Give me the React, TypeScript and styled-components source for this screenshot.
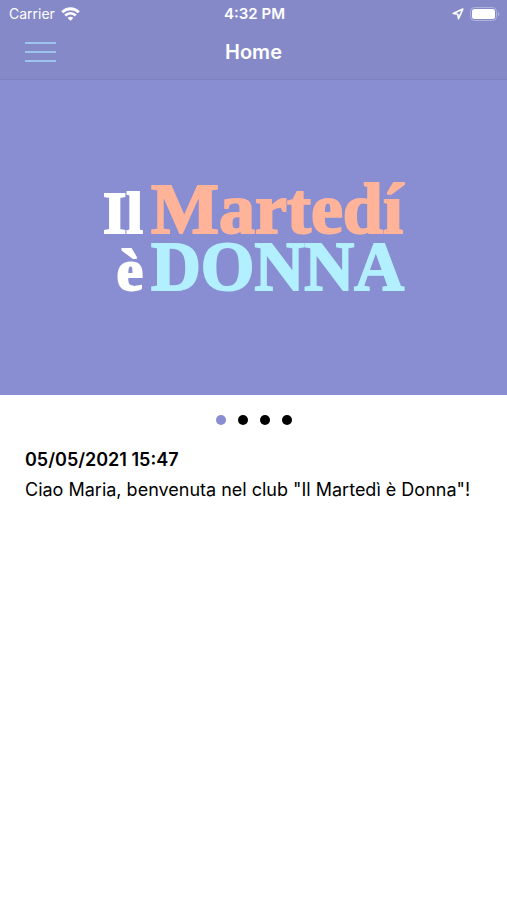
import { useState } from 'react';
import styled, { createGlobalStyle, ThemeProvider } from 'styled-components';

const theme = {
  colors: {
    primary: '#898dd1',
    header: '#8689c8',
    headerBorder: '#7c80bf',
    aqua: '#b3f0ff',
    peach: '#ffb49a',
    menu: '#9bc5ee',
    white: '#ffffff',
    black: '#000000',
  },
};

const GlobalStyle = createGlobalStyle`
  * {
    box-sizing: border-box;
  }

  body {
    margin: 0;
    background: #ffffff;
    color: #000000;
    font-family: Inter, 'Liberation Sans', sans-serif;
  }
`;

const Header = styled.header`
  padding-bottom: 3px;
  background: ${(props) => props.theme.colors.header};
  border-bottom: 1px solid ${(props) => props.theme.colors.headerBorder};
  color: ${(props) => props.theme.colors.white};
`;

const StatusBar = styled.div`
  display: grid;
  grid-template-columns: 1fr auto 1fr;
  align-items: center;
  height: 28px;
  padding: 0 7px 0 9px;
  font-size: 14px;
  line-height: 20px;
`;

const StatusGroup = styled.div<{ $end?: boolean }>`
  display: flex;
  align-items: center;
  justify-content: ${(props) => (props.$end ? 'flex-end' : 'flex-start')};
  gap: 6px;
`;

const Clock = styled.time`
  font-size: 15px;
  font-weight: 600;
`;

const NavBar = styled.nav`
  display: grid;
  grid-template-columns: 1fr auto 1fr;
  align-items: center;
  height: 48px;
  padding: 0 25px;
`;

const MenuButton = styled.button`
  display: flex;
  flex-direction: column;
  justify-self: start;
  gap: 7px;
  width: 31px;
  padding: 0;
  border: 0;
  background: none;
  cursor: pointer;
`;

const MenuLine = styled.span`
  height: 2px;
  background: ${(props) => props.theme.colors.menu};
`;

const Title = styled.h1`
  margin: 0;
  font-size: 20px;
  font-weight: 600;
  line-height: 24px;
`;

const Hero = styled.section`
  display: flex;
  justify-content: center;
  padding: 100px 16px 99px;
  background: ${(props) => props.theme.colors.primary};
`;

const Logo = styled.div`
  display: grid;
  grid-template-columns: auto auto;
  align-items: baseline;
  column-gap: 8px;
  font-family: 'Liberation Serif', serif;
  font-weight: 700;
`;

const LogoSmall = styled.span`
  justify-self: end;
  color: ${(props) => props.theme.colors.white};
  font-size: 60px;
  line-height: 50px;
  -webkit-text-stroke: 2px currentColor;
`;

const LogoLarge = styled.span<{ $tone: 'peach' | 'aqua' }>`
  color: ${(props) => props.theme.colors[props.$tone]};
  font-size: ${(props) => (props.$tone === 'peach' ? '72px' : '69px')};
  line-height: 58px;
  -webkit-text-stroke: 2px currentColor;
`;

const Dots = styled.div`
  display: flex;
  justify-content: center;
  gap: 12px;
  padding: 20px 0;
`;

const Dot = styled.button<{ $active: boolean }>`
  width: 10px;
  height: 10px;
  padding: 0;
  border: 0;
  border-radius: 50%;
  background: ${(props) =>
    props.$active ? props.theme.colors.primary : props.theme.colors.black};
  cursor: pointer;
`;

const Message = styled.article`
  padding: 0 25px;
  font-size: 18px;
  line-height: 30px;
`;

const MessageDate = styled.time`
  display: block;
  font-weight: 600;
`;

const MessageText = styled.p`
  margin: 0;
`;

const WifiIcon = () => (
  <svg width="19" height="14" viewBox="0 0 19 14" fill="none" aria-hidden="true">
    <g stroke="#fff" strokeWidth="2.8">
      <path d="M1.2 5.2C6 .6 13 .6 17.8 5.2" />
      <path d="M4.2 8.5C7.3 5.6 11.7 5.6 14.8 8.5" />
    </g>
    <path d="M6.6 10.9C8.3 9.4 10.7 9.4 12.4 10.9L9.5 13.8Z" fill="#fff" />
  </svg>
);

const LocationIcon = () => (
  <svg width="12" height="12" viewBox="0 0 12 12" fill="none" aria-hidden="true">
    <path
      d="M10.8 1.1 1.2 5.5 5.7 6.2 6.5 10.8Z"
      stroke="#fff"
      strokeWidth="1.6"
      strokeLinejoin="round"
    />
  </svg>
);

const BatteryIcon = () => (
  <svg width="30" height="14" viewBox="0 0 30 14" aria-hidden="true">
    <rect
      x=".5"
      y=".5"
      width="26"
      height="13"
      rx="4"
      fill="none"
      stroke="#b0b2de"
    />
    <rect x="2" y="2" width="23" height="10" rx="2.5" fill="#fff" />
    <path d="M28 4.8C29.7 5.6 29.7 8.4 28 9.2Z" fill="#b0b2de" />
  </svg>
);

const slides = [0, 1, 2, 3];

const App = () => {
  const [activeSlide, setActiveSlide] = useState(0);

  return (
    <ThemeProvider theme={theme}>
      <GlobalStyle />
      <Header>
        <StatusBar>
          <StatusGroup>
            <span>Carrier</span>
            <WifiIcon />
          </StatusGroup>
          <Clock>4:32 PM</Clock>
          <StatusGroup $end>
            <LocationIcon />
            <BatteryIcon />
          </StatusGroup>
        </StatusBar>
        <NavBar>
          <MenuButton type="button" aria-label="Menu">
            <MenuLine />
            <MenuLine />
            <MenuLine />
          </MenuButton>
          <Title>Home</Title>
        </NavBar>
      </Header>

      <main>
        <Hero>
          <Logo>
            <LogoSmall>Il</LogoSmall>
            <LogoLarge $tone="peach">Martedí</LogoLarge>
            <LogoSmall>è</LogoSmall>
            <LogoLarge $tone="aqua">DONNA</LogoLarge>
          </Logo>
        </Hero>

        <Dots>
          {slides.map((slide) => (
            <Dot
              key={slide}
              type="button"
              $active={slide === activeSlide}
              aria-label={`Slide ${slide + 1}`}
              onClick={() => setActiveSlide(slide)}
            />
          ))}
        </Dots>

        <Message>
          <MessageDate dateTime="2021-05-05T15:47">05/05/2021 15:47</MessageDate>
          <MessageText>
            Ciao Maria, benvenuta nel club &quot;Il Martedì è Donna&quot;!
          </MessageText>
        </Message>
      </main>
    </ThemeProvider>
  );
};

export default App;
